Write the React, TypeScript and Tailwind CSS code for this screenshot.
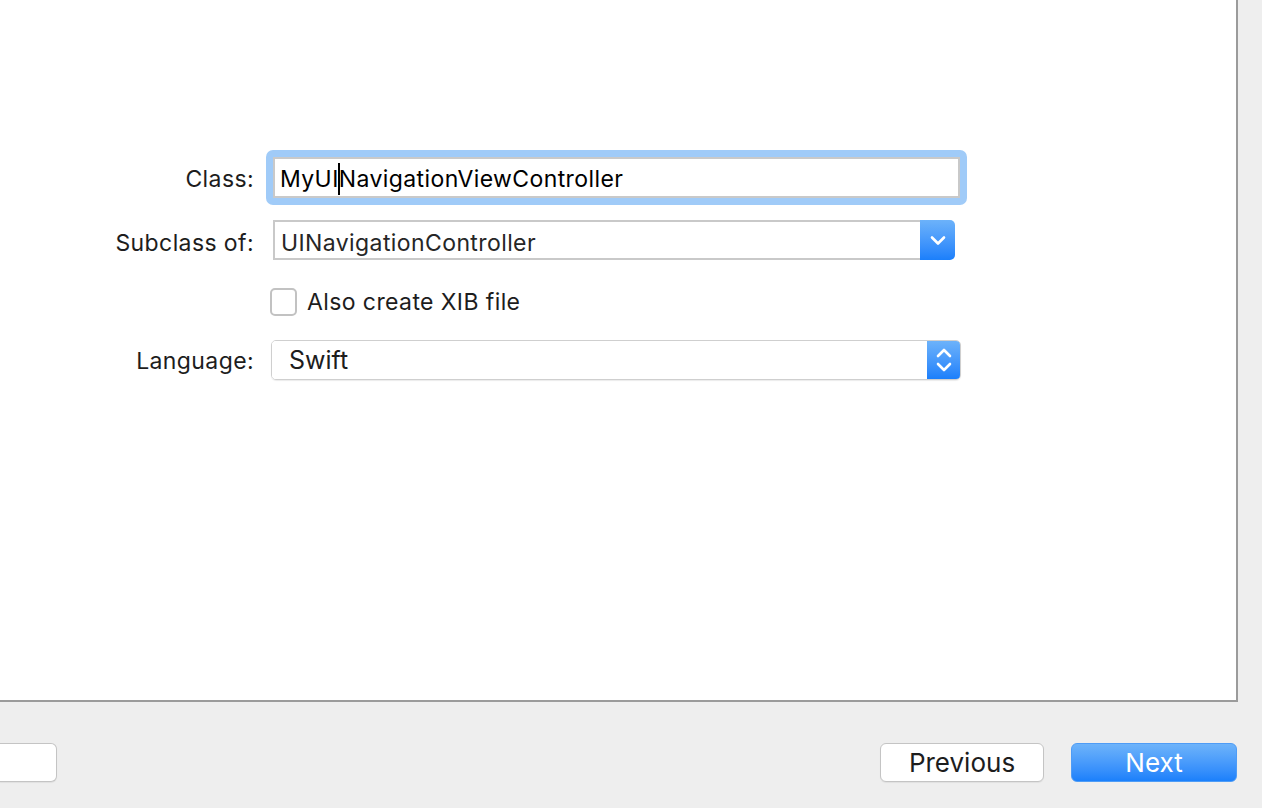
export default function App() {
  return (
    <div
      className="flex h-[808px] w-full flex-col overflow-hidden bg-[#eeeeee] text-[#1d1d1d]"
      style={{ fontFamily: 'Inter, "Helvetica Neue", Arial, sans-serif' }}
    >
      {/* main panel */}
      <div className="h-[702px] w-[1238px] shrink-0 border-b-2 border-r-2 border-[#9b9b9b] bg-white">
        <div className="flex flex-col pt-[150px] text-[23px] tracking-[0.4px]">
          {/* Class */}
          <div className="flex h-[55px] items-center">
            <label className="w-[254px] pt-[3px] text-right">Class:</label>
            <div className="ml-[12px] h-[55px] w-[701px] rounded-[7px] bg-[#a0cbf8] p-[7px]">
              <div className="flex h-full items-center border-2 border-[#c9c9c9] bg-white pl-[5px] pt-[3px] text-black">
                <span>MyUI</span>
                <span className="mx-[-1px] inline-block h-[32px] w-[2px] bg-black" />
                <span>NavigationViewController</span>
              </div>
            </div>
          </div>

          {/* Subclass of */}
          <div className="mt-[15px] flex h-[40px] items-center">
            <label className="w-[254px] pt-[7px] text-right">Subclass of:</label>
            <div className="ml-[19px] flex h-[40px] w-[682px]">
              <div className="flex flex-1 items-center border-2 border-r-0 border-[#c9c9c9] bg-white pl-[6px] pt-[6px] text-[#262626]">
                UINavigationController
              </div>
              <div className="flex w-[35px] items-center justify-center rounded-r-[5px] bg-gradient-to-b from-[#6cb2fa] to-[#1a7ffb]">
                <svg width="16" height="11" viewBox="0 0 16 11">
                  <polyline points="2,2.5 8,8.5 14,2.5" fill="none" stroke="white" strokeWidth="2.6" strokeLinecap="round" strokeLinejoin="round" />
                </svg>
              </div>
            </div>
          </div>

          {/* Checkbox */}
          <div className="mt-[28px] flex h-[28px] items-center">
            <div className="w-[254px]" />
            <div className="ml-[16px] h-[28px] w-[27px] rounded-[5px] border-2 border-[#c2c2c2] bg-white" />
            <span className="ml-[10px]">Also create XIB file</span>
          </div>

          {/* Language */}
          <div className="mt-[24px] flex h-[40px] items-center">
            <label className="w-[254px] pt-[3px] text-right">Language:</label>
            <div className="ml-[17px] flex h-[40px] w-[690px] overflow-hidden rounded-[5px] border border-[#cfcfcf] shadow-[0_1px_1px_rgba(0,0,0,0.08)]">
              <div className="flex flex-1 items-center bg-white pl-[17px] pt-[2px] text-[25px] tracking-normal">Swift</div>
              <div className="flex w-[33px] flex-col items-center justify-center gap-[4px] bg-gradient-to-b from-[#6cb2fa] to-[#1a7ffb]">
                <svg width="16" height="10" viewBox="0 0 16 10">
                  <polyline points="2,8 8,2 14,8" fill="none" stroke="white" strokeWidth="2.6" strokeLinecap="round" strokeLinejoin="round" />
                </svg>
                <svg width="16" height="10" viewBox="0 0 16 10">
                  <polyline points="2,2 8,8 14,2" fill="none" stroke="white" strokeWidth="2.6" strokeLinecap="round" strokeLinejoin="round" />
                </svg>
              </div>
            </div>
          </div>
        </div>
      </div>

      {/* bottom buttons */}
      <div className="flex items-start pt-[41px]">
        <div className="h-[39px] w-[57px] rounded-r-[6px] border-y border-r border-[#c4c4c4] bg-white shadow-[0_1px_1px_rgba(0,0,0,0.06)]" />
        <div className="ml-auto flex gap-[27px] pr-[25px]">
          <button className="flex h-[39px] w-[164px] items-center justify-center rounded-[6px] border border-[#c4c4c4] bg-white text-[26px] text-[#1d1d1d] shadow-[0_1px_1px_rgba(0,0,0,0.06)]">
            Previous
          </button>
          <button className="flex h-[39px] w-[166px] items-center justify-center rounded-[6px] border border-[#4e9cf6] bg-gradient-to-b from-[#6db3fa] to-[#1a80fb] text-[26px] text-white">
            Next
          </button>
        </div>
      </div>
    </div>
  )
}
